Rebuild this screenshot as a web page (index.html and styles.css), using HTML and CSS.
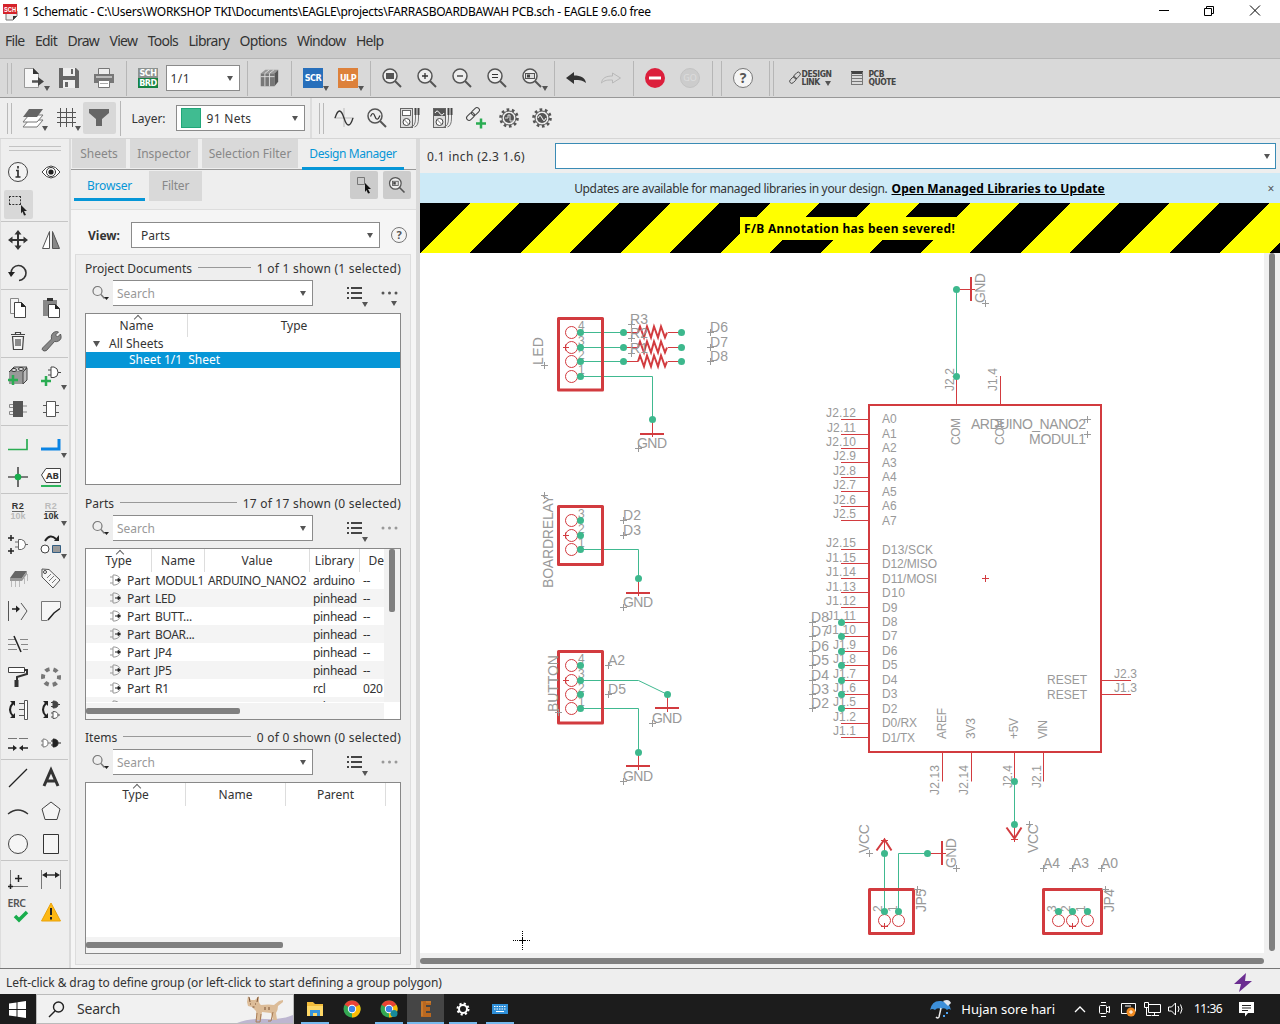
FILE: index.html
```html
<!DOCTYPE html>
<html lang="en">
<head>
<meta charset="utf-8">
<title>1 Schematic - EAGLE 9.6.0 free</title>
<link rel="stylesheet" href="styles.css">
</head>
<body>
<svg class="defs" width="0" height="0">
  <defs>
    <symbol id="mag" viewBox="0 0 24 24"><circle cx="10" cy="10" r="7" fill="#eee" stroke="#555" stroke-width="1.500"/><path d="M15 15l6 6" stroke="#555" stroke-width="2"/></symbol>
    <symbol id="down" viewBox="0 0 6 5"><path d="M0 0h6L3 5z" fill="#555"/></symbol>
    <symbol id="find" viewBox="0 0 18 16"><circle cx="6.500" cy="6" r="4.500" fill="none" stroke="#777" stroke-width="1.200"/><path d="M10 9.500l3.500 4" stroke="#777" stroke-width="1.500"/><path d="M13 12h5l-2.500 3z" fill="#222"/></symbol>
    <symbol id="list" viewBox="0 0 22 21"><path d="M0 2h2M4 2h11M0 7h2M4 7h11M0 12h2M4 12h11" stroke="#444" stroke-width="2" transform="translate(0 -1)"/><path d="M15 15h6l-3 5z" fill="#555"/></symbol>
    <symbol id="gate" viewBox="0 0 12 12"><path d="M3 1h2q5 1 5 5t-5 5H3M3 1v10M0 3h3M0 9h3" fill="none" stroke="#999"/><path d="M5 6h4M8 4.500L10.500 6 8 7.500z" fill="#222" stroke="#222"/></symbol>
    <symbol id="gear" viewBox="0 0 24 24"><circle cx="12" cy="12" r="8.300" fill="none" stroke="#555" stroke-width="3" stroke-dasharray="2.600 2.615"/><circle cx="12" cy="12" r="7" fill="#eee" stroke="#555"/><circle cx="12" cy="12" r="5" fill="#555"/></symbol>
    <symbol id="meter" viewBox="0 0 24 24"><rect x="2.500" y="2.500" width="12" height="19" fill="#ddd" stroke="#666"/><rect x="4.500" y="4.500" width="8" height="5" fill="#fff" stroke="#666"/><circle cx="8.500" cy="16" r="3.500" fill="#fff" stroke="#444"/><path d="M6.500 14l4 4M17.500 2v10q0 9-5 9M20.500 2v10q0 8-4 9" fill="none" stroke="#777" stroke-width="1"/><path d="M17.500 2v7M20.500 2v7" stroke="#444" stroke-width="2"/></symbol>
    <symbol id="chrome" viewBox="0 0 20 20"><circle cx="10" cy="10" r="8.500" fill="#34a853"/><path d="M10 10L2.600 5.700A8.500 8.500 0 0 1 17.400 5.700z" fill="#ea4335"/><path d="M10 10l7.400-4.300A8.500 8.500 0 0 1 10 18.500z" fill="#fbbc05"/><circle cx="10" cy="10" r="4.200" fill="#fff"/><circle cx="10" cy="10" r="3.200" fill="#3b82e8"/></symbol>
  </defs>
</svg>

<div class="window">
  <header class="title">
    <svg width="17" height="18" viewBox="0 0 17 18"><path d="M3 8h11v5l-4 4H3z" fill="#eee" stroke="#777"/><path d="M14 13h-4v4z" fill="#333"/><rect y="1" width="14" height="10" fill="#d5232b"/><text x="1" y="8.500" class="tiny" textLength="12" lengthAdjust="spacingAndGlyphs">SCH</text></svg>
    <span class="title-text">1 Schematic - C:\Users\WORKSHOP TKI\Documents\EAGLE\projects\FARRASBOARDBAWAH PCB.sch - EAGLE 9.6.0 free</span>
    <svg class="wbtns" width="104" height="16" viewBox="0 0 104 16" fill="none" stroke="#000"><path d="M1 6.500h10M46.500 4.500h7v7h-7zM48.500 4.500v-2h7v7h-2M92 1.500l10 10M102 1.500l-10 10"/></svg>
  </header>

  <nav class="menu"><span>File</span><span>Edit</span><span>Draw</span><span>View</span><span>Tools</span><span>Library</span><span>Options</span><span>Window</span><span>Help</span></nav>

  <div class="bar bar-main">
    <i class="grip"></i>
    <span class="t"><svg width="24" height="24" viewBox="0 0 24 24"><path d="M2.500 2.500h9l5 5v14h-14z" fill="#f7f7f7" stroke="#999"/><path d="M11 2v6h6z" fill="#333"/><path d="M10 15.500h8" stroke="#555" stroke-width="2.500"/><path d="M16 11l6 4.500-6 4.500z" fill="#444"/></svg><svg class="dd"><use href="#down"/></svg></span>
    <span class="t"><svg width="24" height="24" viewBox="0 0 24 24"><path d="M2 2h17l3 3v17H2z" fill="#666"/><path d="M6 2h12v8H6zM6 14h12v8H6z" fill="#eee"/><path d="M8 16h3v5H8zM14 3h2v5h-2z" fill="#666"/></svg></span>
    <span class="t"><svg width="24" height="24" viewBox="0 0 24 24"><path d="M6.500 2.500h11v6h-11z" fill="#eee" stroke="#777"/><path d="M2 8h20v9H2z" fill="#777"/><path d="M4 10h16v2H4z" fill="#bbb"/><path d="M6.500 14.500h11v7h-11z" fill="#fff" stroke="#777"/><path d="M8 17.500h8" stroke="#aaa"/></svg></span>
    <i class="sep"></i>
    <span class="t"><span class="schbrd"><b>SCH</b><b>BRD</b></span></span>
    <div class="combo sheet"><span>1/1</span><svg class="ar"><use href="#down"/></svg></div>
    <i class="sep"></i>
    <span class="t"><svg width="22" height="22" viewBox="0 0 24 24"><path d="M3 7l5-4h14l-4 4z" fill="#999"/><path d="M3 7h15v14H3z" fill="#777"/><path d="M18 7l4-4v13l-4 5z" fill="#555"/><path d="M7.500 7v14M12.500 7v14M3 10.500h15M7.500 7l5-4M12.500 7l5-4" stroke="#ddd" fill="none"/></svg></span>
    <i class="sep"></i>
    <span class="t"><b class="sq blue">SCR</b><svg class="dd"><use href="#down"/></svg></span>
    <span class="t"><b class="sq orange">ULP</b><svg class="dd"><use href="#down"/></svg></span>
    <i class="sep"></i>
    <span class="t"><svg width="24" height="24"><use href="#mag"/><rect x="6" y="7" width="8" height="6" fill="#555"/></svg></span>
    <span class="t"><svg width="24" height="24"><use href="#mag"/><path d="M7 10h6M10 7v6" stroke="#333" stroke-width="1.300"/></svg></span>
    <span class="t"><svg width="24" height="24"><use href="#mag"/><path d="M7 10h6" stroke="#333" stroke-width="1.300"/></svg></span>
    <span class="t"><svg width="24" height="24"><use href="#mag"/><path d="M7 8.500h6M7 11.500h6" stroke="#333" stroke-width="1.200"/></svg></span>
    <span class="t"><svg width="24" height="24"><use href="#mag"/><rect x="5.500" y="7.500" width="9" height="5" fill="#ddd" stroke="#555"/><rect x="7" y="8.500" width="3" height="3" fill="#444"/></svg><svg class="dd"><use href="#down"/></svg></span>
    <i class="sep"></i>
    <span class="t"><svg width="24" height="24" viewBox="0 0 24 24"><path d="M2 12l8-6v3.500c7 0 11 2 12 7.500-3-2.500-6-3-12-3V18z" fill="#333"/></svg></span>
    <span class="t"><svg width="24" height="24" viewBox="0 0 24 24"><path d="M21.500 12l-8-5v3C7 10 3 12 2.500 17c3-3 6-3 11-3v3z" fill="#d9d9d9" stroke="#b8b8b8"/></svg></span>
    <i class="sep"></i>
    <span class="t"><svg width="24" height="24" viewBox="0 0 24 24"><circle cx="12" cy="12" r="10" fill="#dc1f3c"/><path d="M6 12h12" stroke="#fff" stroke-width="3"/></svg></span>
    <span class="t"><b class="go">GO</b></span>
    <i class="sep"></i><i class="sep"></i>
    <span class="t"><b class="help big">?</b></span>
    <i class="sep wide"></i><i class="sep tight"></i>
    <span class="link"><svg width="14" height="14" viewBox="0 0 24 24" fill="none" stroke="#444" stroke-width="1.600"><rect x="9" y="4" width="13" height="7" rx="3.500" transform="rotate(-45 15.500 7.500)"/><rect x="2" y="12" width="13" height="7" rx="3.500" transform="rotate(-45 8.500 15.500)"/></svg><b>DESIGN<br>LINK</b><svg class="la" width="6" height="5"><use href="#down"/></svg></span>
    <span class="link quote"><svg width="12" height="14" viewBox="0 0 12 14"><path d="M0 1.500h12" stroke="#444" stroke-width="3"/><path d="M0 4.500h12M0 7.500h12M0 10.500h12M0 13.500h12M.5 1v12M11.500 1v12" stroke="#777"/></svg><b>PCB<br>QUOTE</b></span>
  </div>

  <div class="bar bar-sub">
    <i class="grip"></i>
    <span class="t s"><svg width="24" height="24" viewBox="0 0 24 24"><path d="M8 14h14l-6 7H2z" fill="#fff" stroke="#777"/><path d="M8 9h14l-6 7H2z" fill="#fff" stroke="#777"/><path d="M8 3h14l-6 8H2z" fill="#666"/></svg><svg class="dd"><use href="#down"/></svg></span>
    <span class="t s"><svg width="24" height="24" viewBox="0 0 24 24"><path d="M6.500 2v19M12.500 2v19M18.500 2v19M3 6.500h19M3 11.500h19M3 16.500h19" stroke="#555"/></svg><svg class="dd"><use href="#down"/></svg></span>
    <span class="t s on"><svg width="24" height="24" viewBox="0 0 24 24"><path d="M2 3h20v4l-7 6v7H9v-7L2 7z" fill="#666"/></svg></span>
    <i class="sep"></i>
    <span class="lbl">Layer:</span>
    <div class="combo layer"><i class="sw"></i><span>91 Nets</span><svg class="ar"><use href="#down"/></svg></div>
    <i class="div"></i><i class="grip g2"></i>
    <span class="t s"><svg width="24" height="24" viewBox="0 0 24 24" fill="none"><path d="M12 2v19M2 12h20" stroke="#bbb"/><path d="M3 12q4.500-14 9 0t9 0" stroke="#333" stroke-width="1.300"/></svg></span>
    <span class="t s"><svg width="24" height="24"><use href="#mag"/><path d="M5.500 10.500q2.500-6 4.500 0t5-1" stroke="#333" stroke-width="1.200" fill="none"/></svg></span>
    <span class="t s"><svg width="24" height="24"><use href="#meter"/></svg></span>
    <span class="t s"><svg width="24" height="24"><use href="#meter"/><rect x="3" y="3" width="11" height="7" fill="#555"/><path d="M4 7q2-4 4.500 0t4.500 0" stroke="#fff" fill="none"/></svg></span>
    <span class="t s"><svg width="24" height="24" viewBox="0 0 24 24" fill="none"><rect x="7" y="3" width="9" height="5" rx="2.500" stroke="#444" transform="rotate(-45 11.500 5.500)"/><rect x="2" y="8" width="9" height="5" rx="2.500" stroke="#444" transform="rotate(-45 6.500 10.500)"/><path d="M12 17.500h10M17 12.500v10" stroke="#2aac52" stroke-width="2.500"/></svg></span>
    <span class="t s"><svg width="24" height="24"><use href="#gear"/><path d="M8 12h3v-3h2v6h3" stroke="#ddd" fill="none"/></svg></span>
    <span class="t s"><svg width="24" height="24"><use href="#gear"/><path d="M8 12q2-5 4 0t4 0" stroke="#fff" fill="none"/></svg></span>
  </div>

  <main class="main">
    <aside class="tools">
      <i class="hgrip"></i>
      <div class="grp">
        <span><svg viewBox="0 0 24 24"><circle cx="12" cy="12" r="9.500" fill="#f3f3f3" stroke="#444"/><path d="M12 6v2.500M10 10.500h2V17M9.500 17h5" stroke="#333" stroke-width="1.700" fill="none"/></svg></span>
        <span><svg viewBox="0 0 24 24"><path d="M3 12q9-12 18 0-9 12-18 0z" fill="#fff" stroke="#444"/><circle cx="12" cy="12" r="4.500" fill="#fff" stroke="#333"/><circle cx="12" cy="12" r="2.600" fill="#222"/></svg></span>
        <span class="on"><svg viewBox="0 0 24 24"><path d="M3 3.500h12M3 11.500h12M3.500 3v9M14.500 3v9" stroke="#333" stroke-dasharray="2 1.300" fill="none"/><path d="M15 12l6 6h-3l2 4-2 .5-1.500-4-1.500 2z" fill="#222"/></svg></span><span></span>
      </div>
      <div class="grp">
        <span><svg viewBox="0 0 24 24"><path d="M12 5v14M5 12h14" stroke="#333" stroke-width="2"/><path d="M12 2l3.500 4.500h-7zM12 22l3.500-4.500h-7zM2 12l4.500-3.500v7zM22 12l-4.500-3.500v7z" fill="#333"/></svg></span>
        <span><svg viewBox="0 0 24 24"><path d="M10.500 3.500v17h-7z" fill="#fff" stroke="#555"/><path d="M13.500 3.500v17h7z" fill="#888" stroke="#555"/></svg></span>
        <span><svg viewBox="0 0 24 24"><path d="M5 12a7.500 7.500 0 1 1 8 7.500" fill="none" stroke="#333" stroke-width="1.600"/><path d="M2 11h7l-4 5z" fill="#222"/></svg></span><span></span>
      </div>
      <div class="grp">
        <span><svg viewBox="0 0 24 24"><path d="M4.500 2.500h8v15h-8z" fill="#f6f6f6" stroke="#888"/><path d="M8.500 6.500h7l4 4v11h-11z" fill="#fff" stroke="#444"/><path d="M15 6v5h5z" fill="#222"/></svg></span>
        <span><svg viewBox="0 0 24 24"><path d="M4 4h14v16H4z" fill="#888"/><path d="M8 2h6v3H8z" fill="#333"/><path d="M9.500 8.500h7l4 4v9h-11z" fill="#fff" stroke="#444"/><path d="M16 8v5h5z" fill="#222"/></svg></span>
        <span><svg viewBox="0 0 24 24"><path d="M6.500 7.500h11l-1 13h-9zM5 5.500h14M9.500 5V3.500h5V5M10 10v7M12 10v7M14 10v7" fill="#f5f5f5" stroke="#444" stroke-width="1.200"/></svg></span>
        <span><svg viewBox="0 0 24 24"><path d="M3.500 19l9-9q-1-5 3-7 2-1 4 0l-3 3 2 2 3-3q2 5-2 7-2 1-4 .500l-8 9q-2 1-3.500 0t-.500-2.500z" fill="#888" stroke="#444" stroke-width=".8"/></svg></span>
      </div>
      <div class="grp">
        <span><svg viewBox="0 0 24 24"><path d="M3 8l5-5h13l-4 5z" fill="#ccc" stroke="#444"/><path d="M3 8h14v12H3z" fill="#999"/><path d="M17 8l4-4v12l-4 4z" fill="#bbb" stroke="#444"/><ellipse cx="8" cy="6" rx="2.500" ry="1.500" fill="#eee" stroke="#333"/><ellipse cx="15" cy="5" rx="2.500" ry="1.500" fill="#eee" stroke="#333"/><path d="M2 16h10M7 11v10" stroke="#2aac52" stroke-width="2.500"/></svg></span>
        <span><svg viewBox="0 0 24 24"><path d="M12 3h3q4 1 4 5.500t-4 5H12zM9 6h3M9 11h3M19 8.500h3" fill="#fff" stroke="#444"/><path d="M2 17h10M7 12v10" stroke="#2aac52" stroke-width="2.500"/></svg><svg class="dd"><use href="#down"/></svg></span>
        <span><svg viewBox="0 0 24 24"><path d="M3.500 7.500h4v3h-4zM3.500 14.500h4v3h-4zM17 9h4M17 15h4" fill="#eee" stroke="#888"/><path d="M7 4h10v16H7z" fill="#555"/></svg></span>
        <span><svg viewBox="0 0 24 24"><path d="M7.500 4.500h9v15h-9zM4 8.500h3.500M4 15.500h3.500M16.500 8.500H20M16.500 15.500H20" fill="#fff" stroke="#555"/></svg></span>
      </div>
      <div class="grp">
        <span><svg viewBox="0 0 24 24"><path d="M2 17.500h19V7" fill="none" stroke="#2aac52" stroke-width="1.700"/></svg></span>
        <span><svg viewBox="0 0 24 24"><path d="M2 17h18V7" fill="none" stroke="#0a84e4" stroke-width="3"/></svg><svg class="dd"><use href="#down"/></svg></span>
        <span><svg viewBox="0 0 24 24"><path d="M12 2v20M2 12h20" stroke="#555" stroke-width="1.700"/><circle cx="12" cy="12" r="3.300" fill="#18ad4c"/></svg></span>
        <span><svg viewBox="0 0 24 24"><path d="M7 3.500h14.500v14H7L2.500 10z" fill="#fff" stroke="#444"/><path d="M2 21h20" stroke="#18ad4c" stroke-width="1.800"/><text x="7" y="14" class="ab" textLength="13" lengthAdjust="spacingAndGlyphs">AB</text></svg></span>
      </div>
      <div class="grp">
        <span class="r2"><b>R2</b><b class="dim">10k</b></span>
        <span class="r2"><b class="dim">R2</b><b>10k</b><svg class="dd"><use href="#down"/></svg></span>
        <span><svg viewBox="0 0 24 24"><path d="M2 5h6M5 2v6M2 18h6M5 15v6" stroke="#222" stroke-width="1.500"/><path d="M12.500 6.500h3q4 1 4 5t-4 5h-3zM9 9h3M9 14h3M19 11.500h3" fill="#fff" stroke="#666"/></svg></span>
        <span><svg viewBox="0 0 24 24"><path d="M6 8q5-8 11-2" fill="none" stroke="#222" stroke-width="2"/><path d="M15 8h5V2z" fill="#222"/><circle cx="6" cy="16" r="4" fill="#fff" stroke="#444"/><path d="M13.500 12.500h8v7h-8z" fill="#999" stroke="#345e82"/></svg><svg class="dd"><use href="#down"/></svg></span>
        <span><svg viewBox="0 0 24 24"><path d="M9 5h12l-5 7H4z" fill="#666"/><path d="M4 12h12v3H4zM16 12l5-7v3l-5 7z" fill="#999"/><path d="M5.500 15v6M9.500 15v6M13.500 15v6M18.500 12v6M21.500 8v7" stroke="#bbb"/></svg></span>
        <span><svg viewBox="0 0 24 24"><path d="M3 3l7 .5L21 14l-7 8L3 11z" fill="#f6f6f6" stroke="#555"/><circle cx="6" cy="6" r="1.500" fill="#fff" stroke="#444"/><path d="M8 12l4-4M10 15l5-5M13 17l4-4" stroke="#777"/></svg></span>
        <span><svg viewBox="0 0 24 24"><path d="M2.500 2v20M15 4l6 8-6 9" fill="none" stroke="#555"/><path d="M6 10h5" stroke="#222" stroke-width="1.500"/><path d="M10 6.500l4 3.500-4 3.500z" fill="#222"/></svg></span>
        <span><svg viewBox="0 0 24 24"><path d="M21.500 9V2.500h-19v19h6" fill="#f6f6f6" stroke="#777"/><path d="M9 21l6-7 6-4.500" fill="none" stroke="#222" stroke-width="1.500"/></svg></span>
        <span><svg viewBox="0 0 24 24"><path d="M2 7.500h7M14 7.500h8M2 12.500h8M15 12.500h7M2 17.500h9M17 17.500h5" stroke="#888"/><path d="M8 4l7 16" stroke="#222" stroke-width="1.500"/></svg></span><span></span>
        <span><svg viewBox="0 0 24 24"><path d="M2.500 2.500h16v5h-16z" fill="#fff" stroke="#444"/><path d="M18 5h3v4l-10 3v3" fill="none" stroke="#333" stroke-width="2"/><path d="M8.500 15h4v7h-4z" fill="#333"/></svg></span>
        <span><svg viewBox="0 0 24 24"><circle cx="12" cy="12" r="8" fill="none" stroke="#777" stroke-width="4" stroke-dasharray="4.400 3.980" stroke-dashoffset="2"/></svg></span>
        <span><svg viewBox="0 0 24 24"><path d="M7 5q-6 7 0 13" fill="none" stroke="#222" stroke-width="2"/><path d="M4 3h5v5zM4 20h5v-5z" fill="#222"/><path d="M18.500 2.500h3v19h-3zM13 5.500h5M13 11.500h5M13 17.500h5" fill="#fff" stroke="#555"/></svg></span>
        <span><svg viewBox="0 0 24 24"><path d="M7 5q-6 7 0 13" fill="none" stroke="#222" stroke-width="2"/><path d="M4 3h5v5zM4 20h5v-5z" fill="#222"/><path d="M14 3q5 0 5 3.500t-5 3.500zM12 4.500h2M12 8.500h2M19 6.500h2" fill="#444" stroke="#444"/><path d="M14 13.500q5 0 5 3.500t-5 3.500zM12 15h2M12 19h2M19 17h2" fill="#fff" stroke="#555"/></svg></span>
        <span><svg viewBox="0 0 24 24"><path d="M2 7.500h9M13 7.500h9" stroke="#777"/><path d="M2 17h5M17 17h5" stroke="#222" stroke-width="1.500"/><path d="M7 14l4 3-4 3zM17 14l-4 3 4 3z" fill="#222"/></svg></span>
        <span><svg viewBox="0 0 24 24"><path d="M4 8q5 0 5 4t-5 4zM2 10h2M2 14h2M9 12h3" fill="#fff" stroke="#777"/><path d="M14 8q5 0 5 4t-5 4zM12 10h2M12 14h2M19 12h3" fill="#222" stroke="#222"/></svg></span>
      </div>
      <div class="grp">
        <span><svg viewBox="0 0 24 24"><path d="M3 21L21 3" stroke="#222" stroke-width="1.300"/></svg></span>
        <span><svg viewBox="0 0 24 24"><path d="M5 20l7-16 7 16M8 15h8" fill="none" stroke="#333" stroke-width="3"/></svg></span>
        <span><svg viewBox="0 0 24 24"><path d="M2 15q10-8 20 0" fill="none" stroke="#333" stroke-width="1.300"/></svg></span>
        <span><svg viewBox="0 0 24 24"><path d="M12 3l9 7-3 10.500H6L3 10z" fill="#f5f5f5" stroke="#444"/></svg></span>
        <span><svg viewBox="0 0 24 24"><circle cx="12" cy="12" r="9.500" fill="#f5f5f5" stroke="#444"/></svg></span>
        <span><svg viewBox="0 0 24 24"><path d="M4.500 2.500h15v19h-15z" fill="#f5f5f5" stroke="#333"/></svg></span>
      </div>
      <div class="grp last">
        <span><svg viewBox="0 0 24 24"><path d="M4.500 3v19M2 19.500h20" stroke="#777"/><path d="M9 11.500h7M12.500 8v7M2 19.500h5M4.500 17v5" stroke="#222" stroke-width="1.500"/></svg></span>
        <span><svg viewBox="0 0 24 24"><path d="M2.500 3v19M21.500 3v19" stroke="#777"/><path d="M5 8h14" stroke="#333" stroke-width="1.500"/><path d="M3 8l5-3v6zM21 8l-5-3v6z" fill="#222"/></svg></span>
        <span class="erc"><b>ERC</b><svg viewBox="0 0 24 24"><path d="M9 16l4 4 8-8" fill="none" stroke="#18ad4c" stroke-width="3.500"/></svg></span>
        <span><svg viewBox="0 0 24 24"><path d="M12 3l9.500 18h-19z" fill="#fdb813" stroke="#e9a20b"/><path d="M12 8v7M12 17v2.500" stroke="#222" stroke-width="2"/></svg></span>
      </div>
    </aside>

    <section class="panel">
      <div class="tabs"><span class="w1">Sheets</span><span class="w2">Inspector</span><span class="w3">Selection Filter</span><span class="w4 act">Design Manager</span></div>
      <div class="subtabs"><span class="act">Browser</span><span class="flt">Filter</span>
        <i class="pb first"><svg width="20" height="20" viewBox="0 0 20 20"><path d="M3.500 2.500h7v7h-7z" fill="none" stroke="#777"/><path d="M11 8l6 6h-3l2 4-2 .5-1.500-3.500-1.500 2z" fill="#111"/></svg></i>
        <i class="pb"><svg width="20" height="20" viewBox="0 0 24 24"><use href="#mag"/><rect x="6.500" y="7.500" width="7" height="5" fill="#ddd" stroke="#555"/><rect x="7.500" y="8.500" width="3" height="3" fill="#444"/></svg></i>
      </div>
      <div class="frame">
        <div class="view"><b>View:</b><div class="combo parts"><span>Parts</span><svg class="ar"><use href="#down"/></svg></div><b class="help">?</b></div>
        <div class="inner">
          <div class="head"><span>Project Documents</span><i></i><span class="count">1 of 1 shown (1 selected)</span></div>
          <div class="search"><svg width="18" height="16"><use href="#find"/></svg><div class="combo"><span>Search</span><svg class="ar"><use href="#down"/></svg></div><svg class="ls" width="22" height="21"><use href="#list"/></svg><svg class="dots" width="18" height="16" viewBox="0 0 18 16" fill="#555"><circle cx="2" cy="3" r="1.500"/><circle cx="8.500" cy="3" r="1.500"/><circle cx="15" cy="3" r="1.500"/><path d="M10 11h6l-3 5z"/></svg></div>
          <div class="table">
            <div class="th docs"><span class="sort">Name</span><span>Type</span></div>
            <div class="tree"><svg width="7" height="6"><use href="#down"/></svg>All Sheets</div>
            <div class="tree sel"><span>Sheet 1/1</span><span>Sheet</span></div>
          </div>
          <div class="head"><span>Parts</span><i></i><span class="count">17 of 17 shown (0 selected)</span></div>
          <div class="search"><svg width="18" height="16"><use href="#find"/></svg><div class="combo"><span>Search</span><svg class="ar"><use href="#down"/></svg></div><svg class="ls" width="22" height="21"><use href="#list"/></svg><svg class="dots" width="18" height="16" viewBox="0 0 18 16" fill="#999"><circle cx="2" cy="3" r="1.500"/><circle cx="8.500" cy="3" r="1.500"/><circle cx="15" cy="3" r="1.500"/></svg></div>
          <div class="table ptable">
            <div class="rows">
              <div class="th prt"><span class="sort">Type</span><span>Name</span><span>Value</span><span>Library</span><span>De</span></div>
              <div class="tr prt"><span><svg width="12" height="12"><use href="#gate"/></svg>Part</span><span>MODUL1</span><span>ARDUINO_NANO2</span><span>arduino</span><span>--</span></div>
              <div class="tr prt"><span><svg width="12" height="12"><use href="#gate"/></svg>Part</span><span>LED</span><span></span><span>pinhead</span><span>--</span></div>
              <div class="tr prt"><span><svg width="12" height="12"><use href="#gate"/></svg>Part</span><span>BUTT...</span><span></span><span>pinhead</span><span>--</span></div>
              <div class="tr prt"><span><svg width="12" height="12"><use href="#gate"/></svg>Part</span><span>BOAR...</span><span></span><span>pinhead</span><span>--</span></div>
              <div class="tr prt"><span><svg width="12" height="12"><use href="#gate"/></svg>Part</span><span>JP4</span><span></span><span>pinhead</span><span>--</span></div>
              <div class="tr prt"><span><svg width="12" height="12"><use href="#gate"/></svg>Part</span><span>JP5</span><span></span><span>pinhead</span><span>--</span></div>
              <div class="tr prt"><span><svg width="12" height="12"><use href="#gate"/></svg>Part</span><span>R1</span><span></span><span>rcl</span><span>020</span></div>
              <div class="tr prt"><span><svg width="12" height="12"><use href="#gate"/></svg></span><span></span><span></span><span>rcl</span><span></span></div>
            </div>
            <div class="vs"><i></i></div>
            <div class="hs h1"><i></i></div>
          </div>
          <div class="head"><span>Items</span><i></i><span class="count">0 of 0 shown (0 selected)</span></div>
          <div class="search"><svg width="18" height="16"><use href="#find"/></svg><div class="combo"><span>Search</span><svg class="ar"><use href="#down"/></svg></div><svg class="ls" width="22" height="21"><use href="#list"/></svg><svg class="dots" width="18" height="16" viewBox="0 0 18 16" fill="#999"><circle cx="2" cy="3" r="1.500"/><circle cx="8.500" cy="3" r="1.500"/><circle cx="15" cy="3" r="1.500"/></svg></div>
          <div class="table itable">
            <div class="th itm"><span class="sort">Type</span><span>Name</span><span>Parent</span><span></span></div>
            <div class="hs h2"><i></i></div>
          </div>
        </div>
      </div>
    </section>

    <section class="editor">
      <div class="cmd"><span>0.1 inch (2.3 1.6)</span><div class="combo cmdin"><svg class="ar"><use href="#down"/></svg></div></div>
      <div class="notice"><span>Updates are available for managed libraries in your design.</span><b>Open Managed Libraries to Update</b><em>×</em></div>
      <div class="hazard"><b>F/B Annotation has been severed!</b></div>
      <div class="sheetrow">
        <svg class="schematic" width="844" height="700" viewBox="420 253 844 700">
          <g class="nets">
            <path d="M580.500 332.500h43M580.500 347.500h43M580.500 361.500h43M580.500 376.500h72v43M580.500 549.500h58v29M580.500 680.500h58l29 14M580.500 708.500h58v44M956.500 289.500v87M1014.500 781.500v43M884.500 853.500v58M898.500 911.500v-58h29"/>
          </g>
          <g class="sym">
            <path class="thick" d="M558.500 318.500h44v71.500h-44zM558.500 506.500h44v58h-44zM558.500 651.500h44v71.500h-44zM869.500 889.500h44v44h-44zM1043.500 889.500h58v44h-58z"/>
            <path class="mid" d="M869 405h232v347H869zM640 434h24M626 593h24M655 708h24M626 766h24M971 277v24M942 841v24M876.500 850.500l8-11 7 11M1006.500 827.500l8 11 7-11"/>
            <path class="mid" d="M638 332.500l2-6 4 11 3-11 4 11 3-11 4 11 3-11 4 11 2-5M638 347.500l2-6 4 11 3-11 4 11 3-11 4 11 3-11 4 11 2-5M638 361.500l2-6 4 11 3-11 4 11 3-11 4 11 3-11 4 11 2-5"/>
            <path d="M623 332.500h15M668 332.500h14M623 347.500h15M668 347.500h14M623 361.500h15M668 361.500h14M652.500 419v18M638.500 578v18M667.500 694v18M638.500 752v18M956 289.500h19M927 853.500h19M884.500 838v16M1014.500 824v18"/>
            <path d="M841 419.500h27M841 434.500h27M841 448.500h27M841 462.500h27M841 477.500h27M841 491.500h27M841 506.500h27M841 520.500h27M841 549.500h27M841 563.500h27M841 578.500h27M841 592.500h27M841 607.500h27M841 622.500h27M841 636.500h27M841 651.500h27M841 665.500h27M841 680.500h27M841 694.500h27M841 708.500h27M841 723.500h27M841 737.500h27M1102 680.500h29M1102 694.500h29M956.500 376v28M1000.500 376v28M942.500 753v28.500M971.500 753v28.500M1014.500 753v28.500M1043.500 753v28.500"/>
            <path d="M563 347.500h6M565.500 344.500v6M563 535.500h6M565.500 532.500v6M563 680.500h6M565.500 677.500v6M982 578.500h7M985.500 575v7M881 926.500h7M884.500 923v6M1069 926.500h7M1072.500 923v6M881 840.500h7M1011 839.500h7"/>
            <circle cx="571.500" cy="332.500" r="6"/><circle cx="571.500" cy="347.500" r="6"/><circle cx="571.500" cy="361.500" r="6"/><circle cx="571.500" cy="376.500" r="6"/>
            <circle cx="571.500" cy="520.500" r="6"/><circle cx="571.500" cy="535.500" r="6"/><circle cx="571.500" cy="549.500" r="6"/>
            <circle cx="571.500" cy="665.500" r="6"/><circle cx="571.500" cy="680.500" r="6"/><circle cx="571.500" cy="694.500" r="6"/><circle cx="571.500" cy="708.500" r="6"/>
            <circle cx="884.500" cy="920.500" r="6"/><circle cx="898.500" cy="920.500" r="6"/><circle cx="1058.500" cy="920.500" r="6"/><circle cx="1072.500" cy="920.500" r="6"/><circle cx="1087.500" cy="920.500" r="6"/>
          </g>
          <g class="crosses">
            <path d="M541 365.500h7M544.500 362v7M541 495.500h7M544.500 492v7M555 712.500h7M558.500 709v7M628 324.500h7M631.500 321v7M628 338.500h7M631.500 335v7M628 353.500h7M631.500 350v7M707 332.500h7M710.500 329v7M707 347.500h7M710.500 344v7M707 361.500h7M710.500 358v7M635 448.500h7M638.500 445v7M620 520.500h7M623.500 517v7M620 535.500h7M623.500 532v7M620 607.500h7M623.500 604v7M605 665.500h7M608.500 662v7M605 694.500h7M608.500 691v7M649 723.500h7M652.500 720v7M620 781.500h7M623.500 778v7M982 303.500h7M985.500 300v7M1084 419.500h7M1087.500 416v7M1084 434.500h7M1087.500 431v7M1026 824.500h7M1029.500 821v7M866 853.500h7M869.500 850v7M953 868.500h7M956.500 865v7M914 889.500h7M917.500 886v7M1102 889.500h7M1105.500 886v7M1040 868.500h7M1043.500 865v7M1069 868.500h7M1072.500 865v7M1098 868.500h7M1101.500 865v7M809 622.500h7M812.500 619v7M809 636.500h7M812.500 633v7M809 651.500h7M812.500 648v7M809 665.500h7M812.500 662v7M809 680.500h7M812.500 677v7M809 694.500h7M812.500 691v7M809 708.500h7M812.500 705v7"/>
          </g>
          <g class="name">
            <text x="630" y="324" textLength="18">R3</text><text x="630" y="338" textLength="18">R2</text><text x="630" y="353" textLength="18">R1</text>
            <text x="710" y="332" textLength="18">D6</text><text x="710" y="347" textLength="18">D7</text><text x="710" y="361" textLength="18">D8</text>
            <text x="637" y="448" textLength="30">GND</text><text x="623" y="607" textLength="30">GND</text><text x="652" y="723" textLength="30">GND</text><text x="623" y="781" textLength="30">GND</text>
            <text x="623" y="520" textLength="18">D2</text><text x="623" y="535" textLength="18">D3</text><text x="608" y="665" textLength="17">A2</text><text x="608" y="694" textLength="18">D5</text>
            <text x="971" y="429" textLength="115">ARDUINO_NANO2</text><text x="1029" y="444" textLength="57">MODUL1</text>
            <text x="811" y="622" textLength="18">D8</text><text x="811" y="636" textLength="18">D7</text><text x="811" y="651" textLength="18">D6</text><text x="811" y="665" textLength="18">D5</text><text x="811" y="680" textLength="18">D4</text><text x="811" y="694" textLength="18">D3</text><text x="811" y="708" textLength="18">D2</text>
            <text x="1043" y="868" textLength="17">A4</text><text x="1072" y="868" textLength="17">A3</text><text x="1101" y="868" textLength="17">A0</text>
            <text transform="translate(543 365) rotate(-90)" textLength="28">LED</text>
            <text transform="translate(553 588) rotate(-90)" textLength="93">BOARDRELAY</text>
            <text transform="translate(558 712) rotate(-90)" textLength="57">BUTTON</text>
            <text transform="translate(985 303) rotate(-90)" textLength="30">GND</text>
            <text transform="translate(956 868) rotate(-90)" textLength="30">GND</text>
            <text transform="translate(869 853) rotate(-90)" textLength="29">VCC</text>
            <text transform="translate(1038 853) rotate(-90)" textLength="29">VCC</text>
            <text transform="translate(926 912) rotate(-90)" textLength="23">JP5</text>
            <text transform="translate(1114 912) rotate(-90)" textLength="23">JP4</text>
          </g>
          <g class="pad">
            <text x="578" y="330">4</text><text x="578" y="345">3</text><text x="578" y="359">2</text><text x="578" y="374">1</text>
            <text x="578" y="518">3</text><text x="578" y="533">2</text><text x="578" y="547">1</text>
            <text x="578" y="663">4</text><text x="578" y="678">3</text><text x="578" y="692">2</text><text x="578" y="706">1</text>
            <text transform="translate(882 912) rotate(-90)">2</text><text transform="translate(897 912) rotate(-90)">1</text>
            <text transform="translate(1056 912) rotate(-90)">3</text><text transform="translate(1070 912) rotate(-90)">2</text><text transform="translate(1085 912) rotate(-90)">1</text>
            <g class="end">
              <text x="856" y="417" textLength="30">J2.12</text><text x="856" y="432" textLength="29">J2.11</text><text x="856" y="446" textLength="30">J2.10</text><text x="856" y="460" textLength="23">J2.9</text><text x="856" y="475" textLength="23">J2.8</text><text x="856" y="489" textLength="23">J2.7</text><text x="856" y="504" textLength="23">J2.6</text><text x="856" y="518" textLength="23">J2.5</text><text x="856" y="547" textLength="30">J2.15</text><text x="856" y="562" textLength="30">J1.15</text><text x="856" y="576" textLength="30">J1.14</text><text x="856" y="591" textLength="30">J1.13</text><text x="856" y="605" textLength="30">J1.12</text><text x="856" y="620" textLength="29">J1.11</text><text x="856" y="634" textLength="30">J1.10</text><text x="856" y="649" textLength="23">J1.9</text><text x="856" y="663" textLength="23">J1.8</text><text x="856" y="678" textLength="23">J1.7</text><text x="856" y="692" textLength="23">J1.6</text><text x="856" y="706" textLength="23">J1.5</text><text x="856" y="721" textLength="23">J1.2</text><text x="856" y="735" textLength="23">J1.1</text>
            </g>
            <text x="882" y="423">A0</text><text x="882" y="438">A1</text><text x="882" y="452">A2</text><text x="882" y="467">A3</text><text x="882" y="481">A4</text><text x="882" y="496">A5</text><text x="882" y="510">A6</text><text x="882" y="525">A7</text>
            <text x="882" y="554" textLength="51">D13/SCK</text><text x="882" y="568" textLength="55">D12/MISO</text><text x="882" y="583" textLength="55">D11/MOSI</text><text x="882" y="597" textLength="23">D10</text><text x="882" y="612">D9</text><text x="882" y="626">D8</text><text x="882" y="640">D7</text><text x="882" y="655">D6</text><text x="882" y="669">D5</text><text x="882" y="684">D4</text><text x="882" y="698">D3</text><text x="882" y="713">D2</text><text x="882" y="727" textLength="35">D0/RX</text><text x="882" y="742" textLength="33">D1/TX</text>
            <text x="1047" y="684" textLength="40">RESET</text><text x="1047" y="699" textLength="40">RESET</text><text x="1114" y="678" textLength="23">J2.3</text><text x="1114" y="692" textLength="23">J1.3</text>
            <text transform="translate(954 391) rotate(-90)" textLength="23">J2.2</text><text transform="translate(997 391) rotate(-90)" textLength="23">J1.4</text>
            <text transform="translate(960 445) rotate(-90)" textLength="27">COM</text><text transform="translate(1004 445) rotate(-90)" textLength="27">COM</text>
            <text transform="translate(946 739) rotate(-90)" textLength="31">AREF</text><text transform="translate(975 739) rotate(-90)" textLength="21">3V3</text><text transform="translate(1018 739) rotate(-90)" textLength="21">+5V</text><text transform="translate(1047 739) rotate(-90)" textLength="19">VIN</text>
            <text transform="translate(939 795) rotate(-90)" textLength="30">J2.13</text><text transform="translate(968 795) rotate(-90)" textLength="30">J2.14</text><text transform="translate(1012 788) rotate(-90)" textLength="23">J2.4</text><text transform="translate(1041 788) rotate(-90)" textLength="23">J2.1</text>
          </g>
          <g class="dot">
            <circle cx="580.500" cy="332.500" r="3.500"/><circle cx="580.500" cy="347.500" r="3.500"/><circle cx="580.500" cy="361.500" r="3.500"/><circle cx="580.500" cy="376.500" r="3.500"/>
            <circle cx="623.500" cy="332.500" r="3.500"/><circle cx="623.500" cy="347.500" r="3.500"/><circle cx="623.500" cy="361.500" r="3.500"/>
            <circle cx="681.500" cy="332.500" r="3.500"/><circle cx="681.500" cy="347.500" r="3.500"/><circle cx="681.500" cy="361.500" r="3.500"/>
            <circle cx="652.500" cy="419.500" r="3.500"/><circle cx="580.500" cy="520.500" r="3.500"/><circle cx="580.500" cy="535.500" r="3.500"/><circle cx="580.500" cy="549.500" r="3.500"/><circle cx="638.500" cy="578.500" r="3.500"/>
            <circle cx="580.500" cy="665.500" r="3.500"/><circle cx="580.500" cy="680.500" r="3.500"/><circle cx="580.500" cy="694.500" r="3.500"/><circle cx="580.500" cy="708.500" r="3.500"/><circle cx="667.500" cy="694.500" r="3.500"/><circle cx="638.500" cy="752.500" r="3.500"/>
            <circle cx="956.500" cy="289.500" r="3.500"/><circle cx="956.500" cy="376.500" r="3.500"/><circle cx="1014.500" cy="781.500" r="3.500"/><circle cx="1014.500" cy="824.500" r="3.500"/><circle cx="884.500" cy="853.500" r="3.500"/><circle cx="927.500" cy="853.500" r="3.500"/><circle cx="884.500" cy="911.500" r="3.500"/><circle cx="898.500" cy="911.500" r="3.500"/><circle cx="1058.500" cy="911.500" r="3.500"/><circle cx="1072.500" cy="911.500" r="3.500"/><circle cx="1087.500" cy="911.500" r="3.500"/>
            <circle cx="841.500" cy="622.500" r="3.500"/><circle cx="841.500" cy="636.500" r="3.500"/><circle cx="841.500" cy="651.500" r="3.500"/><circle cx="841.500" cy="665.500" r="3.500"/><circle cx="841.500" cy="680.500" r="3.500"/><circle cx="841.500" cy="694.500" r="3.500"/><circle cx="841.500" cy="708.500" r="3.500"/>
          </g>
          <path d="M513 940.500h18M522.500 931v19" stroke="#000" stroke-dasharray="1 1"/><path d="M520 940.500h6M522.500 938v6" stroke="#000"/>
        </svg>
        <div class="cvs"><i></i></div>
      </div>
      <div class="chs"><i></i></div>
    </section>
  </main>

  <footer class="status"><span>Left-click &amp; drag to define group (or left-click to start defining a group polygon)</span><svg width="20" height="20" viewBox="0 0 20 20"><path d="M13 0L1 11h7l-2 8L19 8h-7z" fill="#6b2d91"/></svg></footer>

  <div class="taskbar">
    <span class="start"><svg width="17" height="17" viewBox="0 0 17 17" fill="#fff"><path d="M0 2.500L7.500 1.500V8H0zM8.500 1.300L17 0v8H8.500zM0 9h7.500v6.500L0 14.500zM8.500 9H17v8l-8.500-1.300z"/></svg></span>
    <div class="tsearch"><svg width="17" height="17" viewBox="0 0 17 17" fill="none" stroke="#222" stroke-width="1.400"><circle cx="10.500" cy="6" r="5"/><path d="M7 10l-6 6"/></svg><span>Search</span>
      <svg class="cat" width="56" height="28" viewBox="0 0 56 28"><path d="M0 28q12-5 28-4t28-4v8z" fill="#bdb6d0"/><path d="M11 1l3 4h4l4-4v6q1 3 2 3 8-1 13 0l5-4 4-1v2l-5 4q0 4-2 7l1 7h-4l-2-7-9-1-1 8h-4l-1-9-4-4-4-1-1-4z" fill="#dcbc98"/><path d="M20 18l-1 9h4l1-8M36 17l-2 9h-3" fill="none" stroke="#a77b55"/><path d="M12 2l1 5M21 2l-1 5M13 9h1M18 9h1M15.500 12h2M28 12v3M32 12v3" stroke="#7a5336"/></svg></div>
    <span class="app ul"><svg width="20" height="20" viewBox="0 0 20 20"><path d="M2 3h6l2 2h8v12H2z" fill="#f4bd3c"/><path d="M2 7h16v10H2z" fill="#ffd867"/><path d="M5 17v-6h10v6h-3v-3H8v3z" fill="#3895db"/></svg></span>
    <span class="app"><svg width="20" height="20"><use href="#chrome"/></svg></span>
    <span class="app ul"><svg width="20" height="20"><use href="#chrome"/><circle cx="15" cy="14.500" r="3.500" fill="#178a9a"/></svg></span>
    <span class="app ul cur"><svg width="20" height="20" viewBox="0 0 20 20"><path d="M5 2h10v4h-5v2h4v4h-4v2h5v4H5z" fill="#b96820"/><path d="M6 3v14M10 3h5" stroke="#d58a3a"/></svg></span>
    <span class="app ul"><svg width="20" height="20" viewBox="0 0 20 20" fill="none" stroke="#fff"><circle cx="10" cy="10" r="4" stroke-width="2"/><circle cx="10" cy="10" r="5.500" stroke-width="2" stroke-dasharray="2.160 2.160"/></svg></span>
    <span class="app ul"><svg width="20" height="20" viewBox="0 0 20 20"><rect x="2" y="5" width="16" height="10" fill="#2f8fd8"/><path d="M4 7.500h12M4 10h12" stroke="#fff" stroke-dasharray="1.500 1"/><path d="M6 12.500h8" stroke="#fff"/></svg></span>
    <span class="weather"><svg width="24" height="24" viewBox="0 0 24 24"><path d="M1 13Q3 3 12 4t10 9q-2-2-4 0-2-3-6-1-4-2-6 1-3-2-5 0z" fill="#3d8fd9"/><path d="M12 11l-2 9q-1 2-3 0" fill="none" stroke="#eee" stroke-width="1.500"/><path d="M14 4q6-3 8 2l-3 3z" fill="#dfe5ee"/><path d="M18 15v2M15 18v2" stroke="#4ea3f0" stroke-width="2"/></svg><span>Hujan sore hari</span></span>
    <span class="tray">
      <svg width="24" height="20" viewBox="0 0 24 20"><path d="M7 13l5-5 5 5" fill="none" stroke="#fff" stroke-width="1.300"/></svg>
      <svg width="24" height="20" viewBox="0 0 24 20" fill="none" stroke="#fff"><rect x="7.500" y="6.500" width="7" height="8" rx="1"/><path d="M14.500 9l3-1.500v6l-3-1.500M9 3.500h5M9 17.500h5"/></svg>
      <svg width="24" height="20" viewBox="0 0 24 20" fill="none" stroke="#fff"><path d="M5.500 4.500h14v8M5.500 4.500v10h7M9 7h6"/><circle cx="15" cy="13" r="4.500" fill="#f18b21" stroke="none"/><path d="M13 13h4M15 11v4"/></svg>
      <svg width="24" height="20" viewBox="0 0 24 20" fill="none" stroke="#fff"><path d="M8.500 5.500h12v8h-12zM4.500 3.500h4v5h-4zM12 16.500h7M14.500 13.500v3M6.500 8.500v8h5"/></svg>
      <svg width="24" height="20" viewBox="0 0 24 20" fill="none" stroke="#fff"><path d="M4.500 8h3l4-4v12l-4-4h-3zM14 7q2 3 0 6M16.500 5.500q3 4.500 0 9"/></svg>
    </span>
    <span class="clock">11:36</span>
    <svg class="chat" width="18" height="18" viewBox="0 0 18 18"><path d="M1 2h15v11h-6l-3 3.500V13H1z" fill="#fff"/><path d="M4 5.500h9M4 8h9M4 10.500h6" stroke="#222"/></svg>
  </div>
</div>
</body>
</html>
```
FILE: styles.css
```css
* { box-sizing: border-box; }
body { margin: 0; width: 1280px; height: 1024px; overflow: hidden; background: #eee; color: #333; font: 12px/16px "Noto Sans", sans-serif; }
i { font-style: normal; display: block; }
svg { display: block; flex: none; }
.defs { position: absolute; }
.window { display: flex; flex-direction: column; height: 1024px; }

/* title and menu */
.title { height: 23px; background: #fff; display: flex; align-items: center; padding-left: 3px; color: #000; }
.title-text { margin-left: 3px; white-space: nowrap; letter-spacing: -.28px; }
.tiny { font: bold 6.500px "Liberation Sans", sans-serif; fill: #fff; }
.wbtns { margin-left: auto; margin-right: 18px; }
.menu { height: 36px; background: #cbcbcb; border-bottom: 1px solid #b5b5b5; display: flex; align-items: center; gap: 10.500px; padding-left: 5px; font-size: 14px; letter-spacing: -.75px; }

/* toolbars */
.bar { display: flex; align-items: center; }
.bar-main { height: 39px; background: #d9d9d9; border-bottom: 1px solid #989898; }
.bar-sub { height: 41px; background: #eee; border-bottom: 1px solid #d5d5d5; }
.grip { width: 5px; height: 31px; border: solid #b9b9b9; border-width: 0 1px; margin: 0 4.500px 0 7px; flex: none; }
.g2 { margin: 0 3.500px 0 7px; }
.div { width: 2px; height: 40px; background: #ddd; margin-left: 5px; }
.sep { width: 1px; height: 35px; background: #b6b6b6; margin: 0 4px; flex: none; }
.wide { margin: 0 0 0 8px; }
.tight { margin: 0 0 0 3px; }
.t { width: 35px; height: 32px; display: flex; align-items: center; justify-content: center; position: relative; flex: none; }
.s { width: 33px; }
.on { background: #d8d8d8; border-radius: 2px; }
.dd { position: absolute; width: 6px; height: 5px; right: 2px; bottom: 3px; }
.combo { height: 26px; border: 1px solid #8b8b8b; background: #fff; display: flex; align-items: center; padding: 0 6px 0 4px; flex: none; }
.combo > span { padding-top: 1px; }
.ar { width: 6px; height: 5px; margin-left: auto; }
.sheet { width: 74px; margin-right: 3px; letter-spacing: .5px; }
.schbrd { width: 20px; height: 20px; }
.schbrd b { display: block; font: bold 9px/10px "DejaVu Sans Condensed", sans-serif; color: #fff; background: #8c9290; text-align: center; letter-spacing: -.5px; }
.schbrd b + b { background: #168342; }
.sq { width: 20px; height: 20px; color: #fff; font: bold 9px/20px "DejaVu Sans Condensed", sans-serif; text-align: center; letter-spacing: -.5px; }
.blue { background: #276fbb; }
.orange { background: #dd813b; }
.go { width: 20px; height: 20px; border-radius: 50%; background: #ccc; border: 1px solid #c3c3c3; color: #ddd; font: 9px/18px "Noto Sans", sans-serif; text-align: center; }
.help { width: 16px; height: 16px; border: 1px solid #777; border-radius: 50%; font: bold 11px/14px "Noto Sans", sans-serif; text-align: center; color: #555; background: #f5f5f5; }
.help.big { width: 20px; height: 20px; font-size: 14px; line-height: 18px; }
.link { display: flex; align-items: center; margin-left: 14px; position: relative; }
.link b { font: bold 8.500px/8px "DejaVu Sans Condensed", sans-serif; letter-spacing: -.45px; color: #444; }
.la { position: absolute; right: 0; bottom: 0; }
.quote { margin-left: 20px; gap: 5px; }
.lbl { margin-left: 7px; width: 44px; padding-top: 2px; }
.layer { width: 129px; }
.layer > span { letter-spacing: .3px; }
.sw { width: 20px; height: 20px; background: #40bc91; border: 1px solid #21a679; margin-right: 6px; }

/* tool palette */
.main { height: 829px; display: flex; }
.tools { width: 71px; border-right: 2px solid #dadada; border-left: 1px solid #ddd; flex: none; }
.hgrip { width: 52px; height: 5px; border: solid #c3c3c3; border-width: 1px 0; margin: 7px 0 4px 8px; }
.grp { width: 67px; display: grid; grid-template-columns: 33px 33px; grid-auto-rows: 33px; border-bottom: 1px solid #c5c5c5; margin-bottom: 1px; padding-left: 1px; }
.grp.last { border: 0; }
.grp > span { display: flex; align-items: center; justify-content: center; position: relative; left: -.5px; }
.grp > span > svg:not(.dd) { width: 24px; height: 24px; }
.grp > .on { width: 29px; height: 29px; margin: 2px; }
.grp .dd { right: 1px; bottom: 2px; }
.ab { font: bold 9.500px "Noto Sans", sans-serif; fill: #333; }
.grp > .r2 { flex-direction: column; }
.r2 b { font: bold 9px/9px "Liberation Sans", sans-serif; }
.r2 b:first-child { border-bottom: 1px solid #666; letter-spacing: .4px; }
.r2 .dim { color: #bbb; }
.erc b { position: absolute; left: 6px; top: 2px; font: 600 10.500px/12px "Noto Sans", sans-serif; letter-spacing: -.4px; color: #555; }

/* design manager */
.panel { width: 345px; flex: none; background: #eee; }
.tabs { display: flex; height: 31px; border-bottom: 1px solid #999; gap: 4px; padding-left: 1px; }
.tabs span { height: 29px; background: #d9d9d9; color: #888; text-align: center; line-height: 29px; white-space: nowrap; }
.w1 { width: 54px; } .w2 { width: 68px; } .w3 { width: 96px; } .w4 { width: 102px; }
.tabs .act { background: none; height: 31px; border-bottom: 3px solid #0696d7; color: #0696d7; letter-spacing: -.42px; }
.subtabs { display: flex; height: 39px; padding: 1px 0 0 3px; }
.subtabs span { width: 71px; height: 30px; text-align: center; line-height: 30px; letter-spacing: -.2px; }
.subtabs .act { color: #0696d7; border-bottom: 3px solid #0696d7; }
.subtabs .flt { width: 53px; margin-left: 4px; background: #d9d9d9; color: #888; }
.pb { width: 28px; height: 28px; background: #ccc; display: flex; align-items: center; justify-content: center; margin-left: 5px; border-radius: 2px; }
.pb.first { margin-left: 148px; }
.frame { height: 759px; background: #f5f5f5; border-top: 1px solid #ddd; padding: 12px 5px 0 4px; }
.view { display: flex; align-items: center; height: 26px; padding-left: 13px; }
.view b:first-child { width: 43px; padding-top: 1px; }
.parts { width: 249px; padding-left: 9px; margin-right: 11px; }
.inner { width: 336px; height: 711px; margin-top: 6px; border: 1px solid #ddd; background: #eee; padding: 5px 9px 0; }
.head { height: 17px; display: flex; align-items: center; white-space: nowrap; }
.head i { flex: 1; height: 1px; background: #999; margin: -3px 6px 0; }
.count { letter-spacing: .23px; }
.search { height: 26px; display: flex; margin: 3px 0 7px; align-items: center; padding-left: 6px; }
.search .combo { width: 200px; border-left: 0; margin-left: 4px; color: #999; }
.ls { margin: 8px 0 0 34px; }
.dots { margin: 10px 0 0 12px; }
.table { height: 172px; border: 1px solid #888; background: #fff; margin-bottom: 10px; width: 316px; position: relative; overflow: hidden; }
.th { height: 22px; display: grid; }
.th span { text-align: center; line-height: 23px; border-right: 1px solid #ddd; position: relative; }
.th span:last-child { border: 0; }
.sort::before { content: ""; position: absolute; width: 5px; height: 5px; border: solid #666; border-width: 1px 0 0 1px; transform: rotate(45deg); left: calc(50% - 2px); top: 2px; }
.docs { grid-template-columns: 102px 1fr; }
.tree { height: 16px; display: flex; align-items: center; padding-left: 7px; gap: 9px; }
.tree.sel { background: #0696d7; color: #fff; padding-left: 43px; gap: 6px; }
.ptable { margin-bottom: 9px; }
.rows { width: 298px; height: 153px; overflow: hidden; }
.prt { display: grid; grid-template-columns: 66px 53px 105px 50px 24px; }
.th.prt span:last-child { text-align: right; }
.tr { height: 18px; line-height: 19px; white-space: nowrap; letter-spacing: -.33px; }
.tr:nth-child(odd) { background: #f4f4f4; }
.tr span { padding-left: 3px; overflow: hidden; }
.tr span:first-child { display: flex; align-items: center; padding-left: 24px; gap: 5px; letter-spacing: -.1px; }
.vs { position: absolute; right: 0; top: 0; width: 16px; height: 153px; background: #f1f1f1; }
.vs i { width: 6px; height: 63px; margin-left: 5px; background: #808080; border-radius: 2px; }
.hs { position: absolute; left: 0; bottom: 0; height: 16px; width: 298px; background: #f3f3f3; padding-top: 5px; }
.hs i { height: 6px; width: 154px; background: #808080; border-radius: 2px; }
.h2 { width: 314px; }
.h2 i { width: 197px; }
.itm { grid-template-columns: 100px 100px 100px 1fr; }

/* drawing area */
.editor { width: 864px; border-left: 4px solid #d9d9d9; display: flex; flex-direction: column; }
.cmd { height: 34px; display: flex; align-items: center; padding-left: 7px; }
.cmd span { width: 128px; letter-spacing: .38px; padding-top: 1px; }
.cmdin { width: 721px; border-color: #3a8bb5; padding-right: 5px; }
.notice { height: 30px; background: #cdeaf7; display: flex; align-items: center; justify-content: center; gap: 4px; padding: 1px 21px 0 0; position: relative; white-space: nowrap; letter-spacing: -.33px; }
.notice b { text-decoration: underline; color: #000; letter-spacing: .13px; }
.notice em { position: absolute; right: 6px; font-style: normal; color: #555; }
.hazard { height: 50px; background: repeating-linear-gradient(135deg, #000 0 35.360px, #ff0 35.360px 70.710px); display: flex; align-items: center; justify-content: center; }
.hazard b { background: #ff0; color: #000; padding: 3px 4px; line-height: 17px; width: 220px; white-space: nowrap; letter-spacing: .32px; }
.sheetrow { height: 700px; display: flex; }
.schematic { background: #fff; }
.cvs { width: 16px; background: #f0f0f0; padding-left: 5px; }
.cvs i { width: 6px; height: 698px; background: #808080; border-radius: 3px; }
.chs { height: 15px; background: #f0f0f0; padding-top: 5px; }
.chs i { width: 844px; height: 6px; background: #808080; border-radius: 3px; }
.schematic text { font-family: "Liberation Sans", Arial, sans-serif; fill: #999; }
.nets { fill: none; stroke: #40b990; }
.sym { fill: none; stroke: #d23b3f; }
.thick { stroke-width: 3; stroke-linejoin: round; }
.mid { stroke-width: 2; }
.crosses { stroke: #999; }
.name { font-size: 14px; }
.pad { font-size: 12px; }
.end { text-anchor: end; }
.dot { fill: #3db88d; }

/* status and taskbar */
.status { height: 26px; border-top: 1px solid #777; display: flex; align-items: center; justify-content: space-between; padding: 2px 27px 0 6px; letter-spacing: -.09px; }
.taskbar { height: 30px; background: #1c1c1c; display: flex; color: #fff; align-items: center; }
.start { width: 36px; padding-left: 9px; }
.tsearch { width: 258px; height: 30px; background: #f1f1f1; border: 1px solid #bbb; color: #333; display: flex; align-items: center; padding-left: 11px; font-size: 14px; gap: 12px; letter-spacing: -.2px; }
.cat { margin-left: auto; }
.app { width: 37px; height: 30px; display: flex; align-items: center; justify-content: center; }
.app:nth-of-type(2) { margin-left: 2px; }
.ul { background: linear-gradient(#76b9ed, #76b9ed) center bottom / 28px 2px no-repeat; }
.cur { background-color: #454545; background-size: 37px 2px; }
.weather { margin-left: auto; display: flex; align-items: center; font-size: 13px; gap: 8px; }
.tray { display: flex; margin-left: 13px; }
.clock { margin-left: 6px; width: 44px; letter-spacing: -.5px; }
.chat { margin-right: 24px; }
```
